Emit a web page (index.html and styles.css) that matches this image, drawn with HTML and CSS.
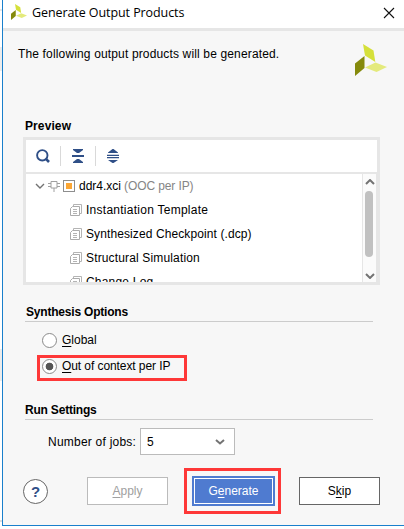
FILE: index.html
```html
<!DOCTYPE html>
<html lang="en">
<head>
<meta charset="utf-8">
<title>Generate Output Products</title>
<link rel="stylesheet" href="styles.css">
</head>
<body>
<svg width="0" height="0" class="defs">
  <symbol id="logo" viewBox="0 0 32 32"><path fill="#d5e03a" d="M8 0 18.500 6.500 20.300 18 10 11.500z"/><path fill="#858a0c" d="M9.500 12v12L0 32V19.500z"/><path fill="#e4ea7c" d="M10 23.500 20.500 18.500 32 23 21.500 28z"/></symbol>
  <symbol id="doc" viewBox="0 0 12 12"><path d="M3.500 2.500v-2h8v9h-2" fill="none" stroke="#b4b4b4"/><path d="M2.500 2.500h7v9h-9v-7z" fill="#fff" stroke="#ababab"/><path d="M3 5.500h4M3 7.500h4M3 9.500h4" fill="none" stroke="#b4b4b4"/></symbol>
</svg>
<main class="dialog">
  <header class="titlebar">
    <svg class="title-logo"><use href="#logo"/></svg>
    <h1>Generate Output Products</h1>
    <svg class="close" viewBox="0 0 10 10"><path d="M0 0 10 10M10 0 0 10" stroke="#111" stroke-width="1.100"/></svg>
  </header>
  <section class="intro">
    <p>The following output products will be generated.</p>
    <svg class="brand"><use href="#logo"/></svg>
  </section>
  <h2 class="preview-title">Preview</h2>
  <section class="preview">
    <div class="toolbar">
      <svg class="tool" viewBox="0 0 14 14"><circle cx="6.300" cy="6.300" r="5.200" fill="none" stroke="#2f4f87" stroke-width="1.900"/><path d="m9.700 9.700 3.300 3.300" stroke="#2f4f87" stroke-width="2.600"/></svg>
      <i class="sep"></i>
      <svg class="tool" viewBox="0 0 14 14"><path fill="#2f4f87" d="M2 0h10v1L8 4H6L2 1zM1 6h12v2H1zM6 10h2l4 3v1H2v-1z"/></svg>
      <i class="sep"></i>
      <svg class="tool" viewBox="0 0 14 14"><path fill="#2f4f87" d="M6.500 0h1L12 3.500V4H2V3.500zM1 6h12v1H1zM1 8h12v1H1zM2 11h10L7.500 14h-1z"/><path d="M1 5h12v1H1zM1 9h12v1H1z" fill="#2f4f87" opacity=".25"/></svg>
    </div>
    <div class="content">
      <div class="tree">
        <div class="row root">
          <svg class="twisty" viewBox="0 0 10 6"><path d="m1 1 4 4 4-4" fill="none" stroke="#737373" stroke-width="1.400"/></svg>
          <svg class="plug" viewBox="0 0 12 12"><path d="M0 3.500h3M0 6.500h3M9 3.500h3M9 6.500h3M6 8v4M3 1.500h6v6.500H3z" fill="none" stroke="#a0a0a0" stroke-width="1"/></svg>
          <i class="chip"></i>
          <span class="file">ddr4.xci</span><span class="note">(OOC per IP)</span>
        </div>
        <div class="row"><svg class="doc"><use href="#doc"/></svg><span class="t1">Instantiation Template</span></div>
        <div class="row"><svg class="doc"><use href="#doc"/></svg><span class="t2">Synthesized Checkpoint (.dcp)</span></div>
        <div class="row"><svg class="doc"><use href="#doc"/></svg><span class="t3">Structural Simulation</span></div>
        <div class="row"><svg class="doc"><use href="#doc"/></svg><span class="t4">Change Log</span></div>
      </div>
      <div class="scrollbar">
        <svg viewBox="0 0 10 6"><path d="m1 5 4-4 4 4" fill="none" stroke="#737373" stroke-width="2"/></svg>
        <i class="thumb"></i>
        <svg viewBox="0 0 10 6"><path d="m1 1 4 4 4-4" fill="none" stroke="#737373" stroke-width="2"/></svg>
      </div>
    </div>
  </section>
  <h2 class="group synth">Synthesis Options</h2>
  <div class="radio"><i class="dot"></i><span><u>G</u>lobal</span></div>
  <div class="radio marked"><i class="dot on"></i><span class="ooc"><u>O</u>ut of context per IP</span></div>
  <h2 class="group run">Run Settings</h2>
  <div class="jobs">
    <label>Number of jobs:</label>
    <div class="select"><span>5</span><svg viewBox="0 0 10 6"><path d="m1 1 4 3.500L9 1" fill="none" stroke="#737373" stroke-width="2"/></svg></div>
  </div>
  <footer class="actions">
    <div class="help">?</div>
    <div class="btn apply"><span><u>A</u>pply</span></div>
    <div class="btn generate"><span>G<u>e</u>nerate</span></div>
    <div class="btn skip"><span>S<u>k</u>ip</span></div>
  </footer>
</main>
</body>
</html>
```

FILE: styles.css
```css
*, *::after { box-sizing: border-box; }
body {
  margin: 0;
  width: 404px;
  height: 529px;
  overflow: hidden;
  padding-left: 2px;
  background: linear-gradient(#fff 9px, #e8e8e8 9px 11px, #fff 11px 47px, #ececec 47px 71px, #fff 71px 349px, #ececec 349px 381px, #fff 381px 520px, #ddd 520px 522px, #fff 522px);
  font: 12px/16px "Liberation Sans", Arial, sans-serif;
  color: #000;
}
.defs { position: absolute; }
svg { display: block; flex: none; }
i { display: block; flex: none; }
span, p, label, h1 { white-space: nowrap; }
h1, h2, p { margin: 0; }
u { text-underline-offset: 2px; text-decoration-thickness: 1px; }
.dialog {
  width: 402px;
  height: 526px;
  border-left: 1px solid #1a80cc;
  border-bottom: 1px solid #1a80cc;
  background: #f7f7f7;
}
.titlebar {
  display: flex;
  align-items: center;
  height: 31px;
  padding: 0 10px 3px 8px;
  background: #fff;
  border-bottom: 3px solid #e6e6e6;
}
.title-logo { width: 16px; height: 16px; margin-top: -2px; }
h1 {
  margin-left: 5px;
  font: 12.5px/18px "Open Sans", "Noto Sans", sans-serif;
  letter-spacing: -0.08px;
}
.close { width: 10px; height: 10px; margin-left: auto; overflow: visible; }
.intro {
  display: flex;
  justify-content: space-between;
  height: 87px;
  padding: 13px 17px 0 15px;
}
.intro p { margin-top: 2px; letter-spacing: 0.15px; }
.brand { width: 32px; height: 32px; }
h2 { font-size: 12px; line-height: 16px; font-weight: bold; }
.preview-title { margin-left: 22px; height: 19px; letter-spacing: 0.1px; }
.preview {
  width: 357px;
  height: 148px;
  margin-left: 20px;
  border: 3px solid #e6e6e6;
  background: #fff;
}
.toolbar {
  display: flex;
  align-items: center;
  height: 34px;
  padding-left: 10px;
  border-bottom: 2px solid #e6e6e6;
}
.tool { width: 14px; height: 14px; }
.sep { width: 1px; height: 20px; background: #d9d9d9; margin: 0 10px; }
.content { display: flex; height: 108px; overflow: hidden; }
.tree { flex: 1; }
.row { display: flex; align-items: center; height: 24px; padding-left: 44px; }
.row.root { padding-left: 9px; }
.twisty { width: 10px; height: 6px; }
.plug { width: 12px; height: 12px; margin-left: 3px; }
.chip { width: 12px; height: 12px; margin-left: 3px; border: 1px solid #8e8e8e; background: #fca735; box-shadow: inset 0 0 0 2px #fff; }
.file { margin-left: 4px; }
.note { margin-left: 3px; color: #858585; letter-spacing: -0.1px; }
.doc { width: 12px; height: 12px; margin-right: 4px; }
.t1 { letter-spacing: 0.26px; }
.t2 { letter-spacing: 0.1px; }
.t3 { letter-spacing: 0.15px; }
.t4 { letter-spacing: 0.2px; }
.scrollbar {
  display: flex;
  flex-direction: column;
  align-items: center;
  justify-content: space-between;
  width: 14px;
  margin-right: 1px;
  padding: 5px 0 3px;
  border-left: 1px solid #e6e6e6;
  background: #fbfbfb;
  box-shadow: 1px 0 #e6e6e6;
}
.scrollbar svg { width: 10px; height: 6px; margin-left: 1px; }
.thumb { width: 8px; height: 66px; margin: 6px 1px auto 0; border-radius: 4px; background: #c1c1c1; }
.group { width: 348px; height: 18px; margin-left: 22px; padding-left: 1px; border-bottom: 1px solid #ccc; letter-spacing: -0.2px; }
.synth { margin-top: 19px; }
.radio { position: relative; display: flex; align-items: center; height: 26px; padding-left: 39px; }
.synth + .radio { margin-top: 5px; }
.ooc { letter-spacing: -0.08px; }
.dot { width: 15px; height: 15px; border: 1px solid #8a8a8a; border-radius: 50%; background: #fff; margin-right: 5px; }
.dot.on { background: radial-gradient(circle, #555 3.5px, #fff 4.2px); }
.marked::after { content: ""; position: absolute; left: 34px; top: 2px; width: 150px; height: 26px; border: 3px solid #fe3838; }
.run { margin-top: 23px; padding-left: 0; }
.jobs { display: flex; align-items: center; height: 27px; margin: 8px 0 0 45px; }
.jobs label { width: 92px; letter-spacing: 0.23px; }
.select { display: flex; align-items: center; justify-content: space-between; width: 95px; height: 27px; padding: 0 9px 0 6px; border: 1px solid #bbb; background: #fff; }
.select svg { width: 10px; height: 6px; }
.actions { display: flex; align-items: center; height: 30px; margin: 21px 0 0 20px; }
.help { width: 25px; height: 25px; border: 1px solid #666; border-radius: 50%; background: #fff; color: #2f4f87; font: bold 15px/24px "Liberation Sans", Arial, sans-serif; text-align: center; }
.btn { position: relative; display: flex; align-items: center; justify-content: center; width: 81px; height: 28px; border: 1px solid #bbb; background: #fff; }
.apply { margin-left: 39px; color: #a0a0a0; }
.generate { width: 83px; height: 30px; margin-left: 24px; border: 2px solid #4f7bd0; background: #4f7bd0; color: #fff; box-shadow: inset 0 0 0 1px #fff; }
.generate::after { content: ""; position: absolute; left: -10px; top: -10px; width: 97px; height: 46px; border: 3px solid #fe3838; }
.skip { margin-left: 24px; border-color: #666; }
```
